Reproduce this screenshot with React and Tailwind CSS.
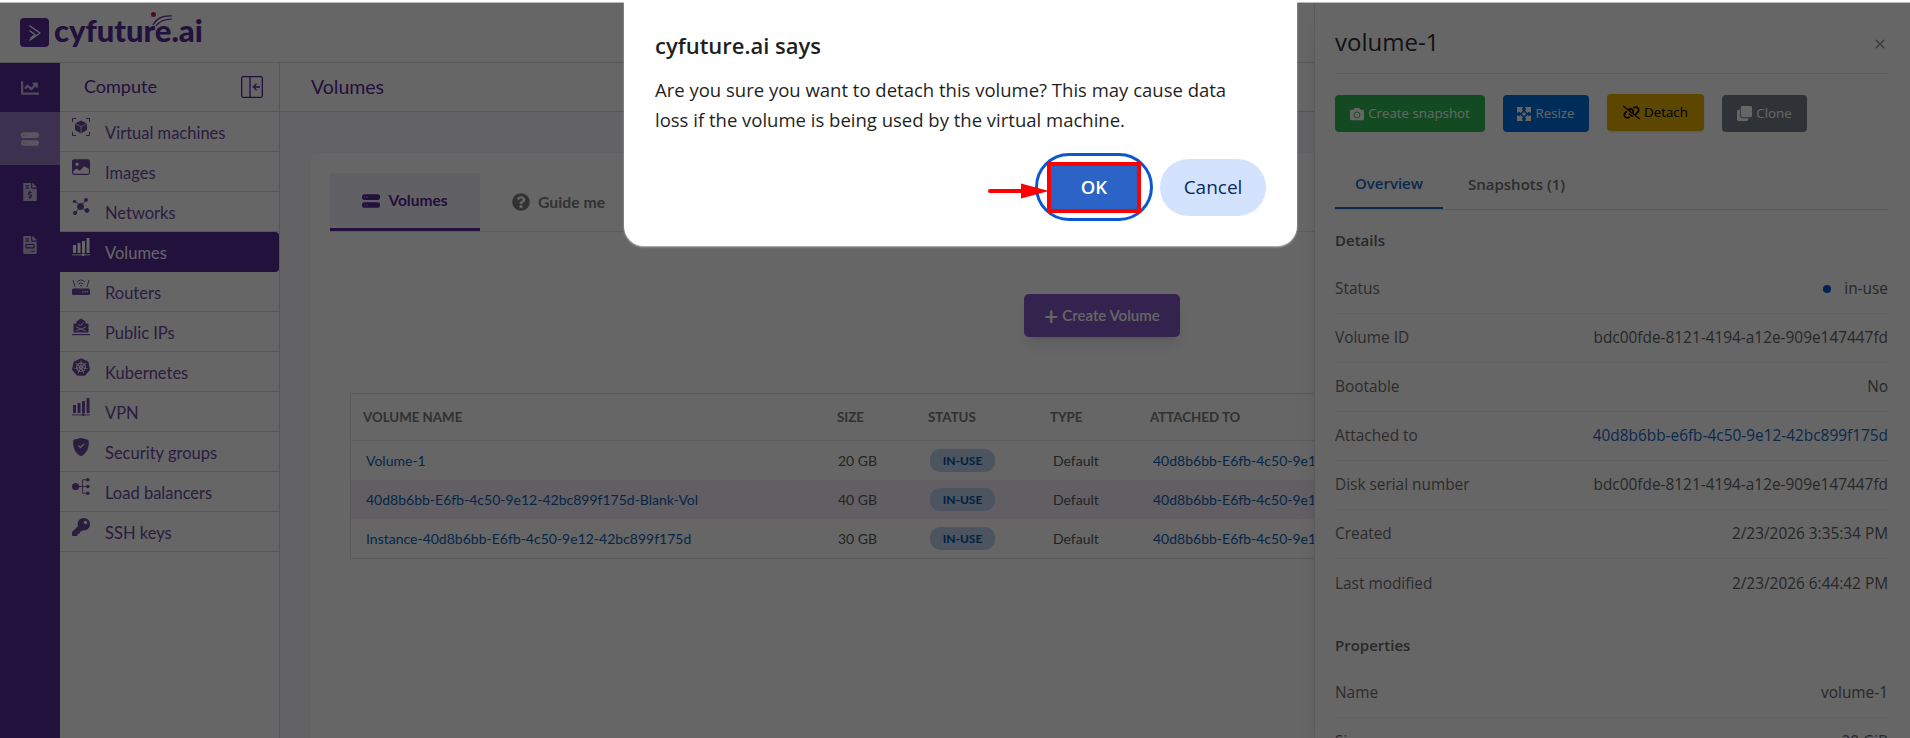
import React from 'react';
import { FaChartLine, FaFileInvoiceDollar, FaFileInvoice, FaCamera, FaClone, FaQuestionCircle, FaKey } from 'react-icons/fa';
import { FaLinkSlash } from 'react-icons/fa6';
import { BsHddStackFill, BsImageFill, BsShieldFillCheck, BsX } from 'react-icons/bs';
import { SiKubernetes } from 'react-icons/si';

function VmIcon() {
  return (
    <svg viewBox="0 0 18 18" className="w-[18px] h-[18px]" fill="none">
      <path d="M0.5 4V0.5H4M14 0.5H17.5V4M0.5 14V17.5H4M14 17.5H17.5V14" stroke="currentColor" strokeWidth="1" />
      <path d="M9 2.5L15 5.5V12L9 15.5L3 12V5.5Z" fill="currentColor" />
      <path d="M3 5.5L9 8.7L15 5.5M9 8.7V15.5" stroke="#ffffff" strokeWidth="0.7" />
    </svg>
  );
}

function NetworkIcon() {
  return (
    <svg viewBox="0 0 18 18" className="w-[18px] h-[18px]" fill="currentColor" stroke="currentColor" strokeWidth="1">
      <line x1="3" y1="3" x2="15" y2="14" />
      <line x1="13.5" y1="2.5" x2="3" y2="15" />
      <circle cx="8.5" cy="8.5" r="3" />
      <circle cx="2.5" cy="3.5" r="1.2" />
      <circle cx="14" cy="1.8" r="1.5" />
      <circle cx="15" cy="12.5" r="2" />
      <circle cx="3" cy="15" r="1.6" />
    </svg>
  );
}

function BarsIcon() {
  return (
    <svg viewBox="0 0 18 18" className="w-[18px] h-[18px]" fill="currentColor">
      <rect x="1" y="7" width="3" height="8" />
      <rect x="5.5" y="5" width="3" height="10" />
      <rect x="10" y="3" width="3" height="12" />
      <rect x="14.5" y="0" width="3" height="15" />
      <rect x="0" y="16.4" width="18" height="0.9" />
      <rect x="10.2" y="15.4" width="2" height="2.6" />
    </svg>
  );
}

function RouterIcon() {
  return (
    <svg viewBox="0 0 18 18" className="w-[18px] h-[18px]">
      <rect x="0" y="10.5" width="18" height="6.5" rx="1.5" fill="currentColor" />
      <circle cx="11" cy="13.7" r="0.7" fill="#ffffff" />
      <circle cx="13.2" cy="13.7" r="0.7" fill="#ffffff" />
      <circle cx="15.4" cy="13.7" r="0.7" fill="#ffffff" />
      <path d="M5 4Q9 0 13 4M6.5 6Q9 3.6 11.5 6M8 8Q9 7 10 8M1 2L3 9M17 2L15 9" fill="none" stroke="currentColor" strokeWidth="0.9" />
    </svg>
  );
}

function PublicIpIcon() {
  return (
    <svg viewBox="0 0 18 18" className="w-[18px] h-[18px]">
      <path d="M1.5 14.5V5.5H4.5V3.5L9 0.5L13.5 3.5V5.5H16.5V14.5Z" fill="currentColor" />
      <path d="M6.5 6L8.4 8L11.7 4.2M4 13L14 9M4 9L14 13" fill="none" stroke="#ffffff" strokeWidth="0.8" />
      <rect x="0" y="16" width="18" height="1.2" fill="currentColor" />
    </svg>
  );
}

function BalancerIcon() {
  return (
    <svg viewBox="0 0 18 18" className="w-[18px] h-[18px]" fill="currentColor">
      <circle cx="3.6" cy="8.5" r="3.6" />
      <circle cx="15.8" cy="1.8" r="1.8" />
      <circle cx="15.8" cy="8.5" r="1.8" />
      <circle cx="15.8" cy="15.2" r="1.8" />
      <path d="M14 1.8H10.5V15.2H14M7 8.5H14" fill="none" stroke="currentColor" strokeWidth="0.9" />
    </svg>
  );
}

function ToggleIcon() {
  return (
    <svg viewBox="0 0 22 22" className="w-[22px] h-[22px]" fill="none" stroke="currentColor" strokeWidth="1.3">
      <rect x="0.7" y="0.7" width="20.6" height="20.6" rx="1.5" />
      <line x1="9" y1="0.7" x2="9" y2="21.3" />
      <path d="M19 11H12.5M15.5 7.8L12.3 11L15.5 14.2" />
    </svg>
  );
}

function ResizeIcon() {
  return (
    <svg viewBox="0 0 14 14" className="w-[14px] h-[14px]" fill="currentColor">
      <path d="M0 0H6L4.8 2.2L6 3.5L3.5 6L2.2 4.8L0 6ZM14 0V6L11.8 4.8L10.5 6L8 3.5L9.2 2.2L8 0ZM0 14V8L2.2 9.2L3.5 8L6 10.5L4.8 11.8L6 14ZM14 14H8L9.2 11.8L8 10.5L10.5 8L11.8 9.2L14 8Z" />
      <rect x="5.5" y="5.5" width="3" height="3" />
    </svg>
  );
}

function Logo() {
  return (
    <div className="flex items-center pl-5 gap-[5px] relative">
      <div className="w-[29px] h-[29px] rounded-[4px] bg-[#55289a] flex items-center justify-center">
        <svg viewBox="0 0 20 20" className="w-5 h-5" fill="none" stroke="#ffffff" strokeWidth="1.5" strokeLinecap="round" strokeLinejoin="round">
          <path d="M5 3L15 10L5 17M5 8L10 11.5L6 15" />
        </svg>
      </div>
      <span className="font-['Lato',sans-serif] font-black text-[31px] leading-none text-[#55289a] pb-1">cyfuture.ai</span>
      <span className="absolute left-[151px] top-[-3px] w-[5px] h-[5px] rounded-full bg-[#c01860]" />
      <svg className="absolute left-[152px] top-[-2px] w-[24px] h-[14px]" viewBox="0 0 24 14" fill="none" stroke="#55289a" strokeWidth="1.2">
        <path d="M1 12Q6 2 20 3M4 13Q9 6 20 6" />
      </svg>
    </div>
  );
}

const railItems = [
  { Icon: FaChartLine, h: 'h-[49px]' },
  { Icon: BsHddStackFill, h: 'h-[53px]', active: true },
  { Icon: FaFileInvoiceDollar, h: 'h-[53px]' },
  { Icon: FaFileInvoice, h: 'h-[53px]' },
];

const navItems = [
  { label: 'Virtual machines', icon: <VmIcon /> },
  { label: 'Images', icon: <BsImageFill className="w-[18px] h-[18px]" /> },
  { label: 'Networks', icon: <NetworkIcon /> },
  { label: 'Volumes', icon: <BarsIcon />, active: true },
  { label: 'Routers', icon: <RouterIcon /> },
  { label: 'Public IPs', icon: <PublicIpIcon /> },
  { label: 'Kubernetes', icon: <SiKubernetes className="w-[18px] h-[18px]" /> },
  { label: 'VPN', icon: <BarsIcon /> },
  { label: 'Security groups', icon: <BsShieldFillCheck className="w-[18px] h-[18px]" /> },
  { label: 'Load balancers', icon: <BalancerIcon /> },
  { label: 'SSH keys', icon: <FaKey className="w-[18px] h-[18px]" /> },
];

const volumes = [
  { name: 'Volume-1', size: '20 GB' },
  { name: '40d8b6bb-E6fb-4c50-9e12-42bc899f175d-Blank-Vol', size: '40 GB', hover: true },
  { name: 'Instance-40d8b6bb-E6fb-4c50-9e12-42bc899f175d', size: '30 GB' },
];

const details = [
  { label: 'Volume ID', value: 'bdc00fde-8121-4194-a12e-909e147447fd' },
  { label: 'Bootable', value: 'No' },
  { label: 'Attached to', value: '40d8b6bb-e6fb-4c50-9e12-42bc899f175d', link: true },
  { label: 'Disk serial number', value: 'bdc00fde-8121-4194-a12e-909e147447fd' },
  { label: 'Created', value: '2/23/2026 3:35:34 PM' },
  { label: 'Last modified', value: '2/23/2026 6:44:42 PM', last: true },
];

function DetailRow({ label, children, last }) {
  return (
    <div className={`h-[49px] shrink-0 flex items-center justify-between text-[15.4px] ${last ? '' : 'border-b border-[#f2f2f2]'}`}>
      <span className="text-[#6e6e6e] font-medium">{label}</span>
      {children}
    </div>
  );
}

function Sidebar() {
  return (
    <aside className="w-[220px] shrink-0 border-r border-[#d8d8d8] bg-white">
      <div className="h-[49px] flex items-center justify-between pl-6 pr-4 border-b border-[#d8d8d8] text-[#55289a]">
        <span className="text-[18px] pb-[2px]">Compute</span>
        <ToggleIcon />
      </div>
      {navItems.map((item) => (
        <div
          key={item.label}
          className={`h-10 flex items-start pl-3 ${item.active ? 'bg-[#55289a] text-[#ffffff] rounded-r-[4px]' : 'border-b border-[#d8d8d8] text-[#6a4aa0]'}`}
        >
          <span className="w-[33px] pt-[6px] shrink-0">{item.icon}</span>
          <span className="text-[16.5px] leading-[20px] pt-[11px]">{item.label}</span>
        </div>
      ))}
    </aside>
  );
}

function VolumesPage() {
  return (
    <main className="flex-1 min-w-0 flex flex-col">
      <div className="h-[49px] shrink-0 flex items-center pl-[31px] border-b border-[#d8d8d8] text-[19.5px] text-[#55289a]">Volumes</div>
      <div className="flex-1 bg-[#f8f8fd] pl-[30px] pr-4 pt-[41px]">
        <div className="h-[600px] bg-white rounded-lg shadow-sm p-5">
          <div className="flex border-b border-[#e4e4e4] h-[59px]">
            <div className="w-[150px] flex items-center justify-center gap-2 bg-[#f3f1fb] border-b-[3px] border-[#55289a] text-[#55289a] font-bold text-[15.5px]">
              <BsHddStackFill className="w-[18px] h-[18px]" />
              Volumes
            </div>
            <div className="flex items-center gap-2 pl-8 text-[#7d7d7d] font-bold text-[15.8px]">
              <FaQuestionCircle className="w-[18px] h-[18px]" />
              Guide me
            </div>
          </div>
          <div className="flex justify-center pt-[62px]">
            <button className="w-[156px] h-[43px] rounded-[5px] bg-[#8557c5] text-white font-semibold text-[15px] flex items-center justify-center gap-1 shadow-lg">
              <span className="text-[24px] leading-none">+</span> Create Volume
            </button>
          </div>
          <div className="mt-14 mx-5 border border-[#d9e0e0] text-[14px]">
            <div className="h-[47px] pt-[2px] grid grid-cols-[473px_91px_122px_100px_1fr] items-center border-b border-[#e6e6e6] font-bold text-[13.3px] text-[#7a7a7a] bg-[#fcfffc]">
              <span className="pl-[12px]">VOLUME NAME</span>
              <span className="pl-[13px]">SIZE</span>
              <span className="pl-[13px]">STATUS</span>
              <span className="pl-[13px]">TYPE</span>
              <span className="pl-[13px]">ATTACHED TO</span>
            </div>
            {volumes.map((v) => (
              <div key={v.name} className={`h-[39px] grid grid-cols-[473px_91px_122px_100px_1fr] items-center ${v.hover ? 'bg-[#f3edf8]' : 'bg-[#fdfffd]'}`}>
                <span className="pl-[15px] text-[#0f5fb5]">{v.name}</span>
                <span className="pl-[14px] text-[#5a5a5a]">{v.size}</span>
                <span className="pl-[15px]">
                  <span className="inline-flex items-center justify-center w-[65px] h-[23px] rounded-[10px] bg-[#bcd2ee] text-[#0b4f9e] font-bold text-[12px]">IN-USE</span>
                </span>
                <span className="pl-4 text-[#5a5a5a]">Default</span>
                <span className="pl-4 text-[#0f5fb5] whitespace-nowrap">40d8b6bb-E6fb-4c50-9e12-42bc899f175d</span>
              </div>
            ))}
          </div>
        </div>
      </div>
    </main>
  );
}

function DetailPanel() {
  return (
    <div className="absolute right-0 top-0 bottom-0 w-[596px] flex flex-col bg-white border-l border-[#e0e0e0] pl-5 pr-[22px] font-['Open_Sans',sans-serif] overflow-hidden z-10 shadow-xl">
      <div className="h-[71px] shrink-0 flex items-center justify-between border-b border-[#e8e8e8]">
        <span className="text-[24px] font-medium text-[#303030] pt-[7px]">volume-1</span>
        <BsX className="w-5 h-5 -mr-[2px] mt-[11px] text-[#8a8a8a]" />
      </div>
      <div className="flex gap-[18px] mt-[21px]">
        <button className="w-[150px] h-[37px] rounded-[4px] bg-[#30b955] text-white text-[13.3px] flex items-center justify-center gap-1"><FaCamera className="w-[14px] h-[14px]" />Create snapshot</button>
        <button className="w-[86px] h-[37px] rounded-[4px] bg-[#006ee0] text-white text-[13.3px] flex items-center justify-center gap-1"><ResizeIcon />Resize</button>
        <button className="w-[97px] h-[37px] -mt-px rounded-[4px] bg-[#e6af00] text-black text-[13.3px] flex items-center justify-center gap-1 shadow-sm"><FaLinkSlash className="w-[17px] h-[17px]" />Detach</button>
        <button className="w-[85px] h-[37px] rounded-[4px] bg-[#757f8c] text-white text-[13.3px] flex items-center justify-center gap-1"><FaClone className="w-[15px] h-[15px]" />Clone</button>
      </div>
      <div className="flex h-[61px] shrink-0 mt-[17px] border-b border-[#e0e0e0] text-[15px] font-semibold">
        <div className="w-[108px] flex items-center justify-center border-b-2 border-[#1a66c4] text-[#1a66c4] pt-[10px]">Overview</div>
        <div className="pl-[25px] flex items-center text-[#707070] pt-[10px]">Snapshots (1)</div>
      </div>
      <div className="h-[55px] shrink-0 flex items-center text-[15px] font-semibold text-[#666666] pt-[5px]">Details</div>
      <DetailRow label="Status">
        <span className="flex items-center gap-[13px] text-[#646464]">
          <span className="w-2 h-2 rounded-full bg-[#0558c6]" />
          in-use
        </span>
      </DetailRow>
      {details.map((d) => (
        <DetailRow key={d.label} label={d.label} last={d.last}>
          <span className={d.link ? 'text-[#1a66c4]' : 'text-[#646464]'}>{d.value}</span>
        </DetailRow>
      ))}
      <div className="h-[50px] shrink-0 flex items-end pb-[2px] text-[15px] font-semibold text-[#666666]">Properties</div>
      <div className="mt-[11px]">
        <DetailRow label="Name"><span className="text-[#646464]">volume-1</span></DetailRow>
        <DetailRow label="Size"><span className="text-[#646464]">20 GiB</span></DetailRow>
      </div>
    </div>
  );
}

function ConfirmDialog() {
  return (
    <div className="absolute left-[624px] top-[-20px] w-[673px] h-[266px] rounded-[20px] bg-white shadow-[0_1px_2px_rgba(255,255,255,0.6)] pt-[51px] pl-[31px] pr-[31px] font-['Open_Sans',sans-serif] z-30">
      <h2 className="text-[22px] leading-7 font-semibold text-[#1f1f1f]">cyfuture.ai says</h2>
      <p className="mt-[16px] text-[18.5px] leading-[30px] text-[#1f1f1f] w-[600px]">Are you sure you want to detach this volume? This may cause data loss if the volume is being used by the virtual machine.</p>
      <div className="absolute right-[31px] top-[173px] flex items-center gap-[7px]">
        <div className="w-[118px] h-[68px] rounded-full border-[3px] border-[#0b57d0] flex items-center justify-center">
          <button className="w-[94px] h-[51px] bg-[#2b63c6] border-[4px] border-[#ff0000] text-white font-semibold text-[18.5px]">OK</button>
        </div>
        <button className="w-[106px] h-[57px] rounded-full bg-[#d3e3fd] text-[#0b2a5b] font-medium text-[19px]">Cancel</button>
      </div>
      <svg className="absolute left-[364px] top-[202px] w-[62px] h-[18px]" viewBox="0 0 62 18">
        <line x1="2" y1="9" x2="36" y2="9" stroke="#ff0000" strokeWidth="4" strokeLinecap="round" />
        <path d="M33 1.5L61 9L33 16.5Z" fill="#ff0000" />
      </svg>
    </div>
  );
}

export default function App() {
  return (
    <div className="relative w-[1910px] h-[738px] overflow-hidden bg-white font-['Lato',sans-serif]">
      <div className="h-[3px] bg-white border-b border-[#bbbbbb]" />
      <div className="relative h-[735px]">
        <div className="h-[60px] flex items-center border-b border-[#d8d8d8]">
          <Logo />
        </div>
        <div className="flex h-[675px]">
          <nav className="w-[60px] shrink-0 bg-[#55289a] text-[#ffffff]">
            {railItems.map(({ Icon, h, active }, i) => (
              <div key={i} className={`${h} flex items-center justify-center ${active ? 'bg-[#e0d0f5]/50' : ''}`}>
                <Icon className="w-[18px] h-[18px] opacity-70" />
              </div>
            ))}
          </nav>
          <Sidebar />
          <VolumesPage />
        </div>
        <DetailPanel />
        <div className="absolute inset-0 bg-black/60 z-20" />
      </div>
      <ConfirmDialog />
    </div>
  );
}
